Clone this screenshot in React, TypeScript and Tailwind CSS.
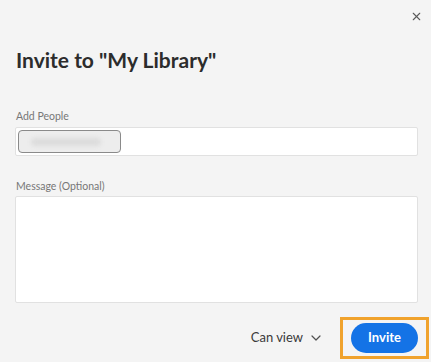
import { X, ChevronDown } from 'lucide-react';

export default function App() {
  return (
    <div className="w-[431px] h-[362px] bg-[#f4f4f4] overflow-hidden font-['Lato',sans-serif]">
      <div className="flex justify-end pt-[10px] pr-[8px]">
        <button className="text-[#5a5a5a]">
          <X size={13} strokeWidth={2} />
        </button>
      </div>
      <div className="pl-[15px] pr-[13px]">
        <h1 className="mt-[23px] text-[21px] leading-[28px] font-bold text-[#2c2c2c] pl-px">
          Invite to "My Library"
        </h1>

        <label className="block mt-[35px] text-[10.5px] leading-[14px] text-[#777] pl-px">Add People</label>
        <div className="mt-[4px] h-[29px] bg-white border border-[#e1e1e1] rounded-[2px] flex items-center pl-[2px]">
          <div className="w-[103px] h-[23px] rounded-[4px] border border-[#8a8a8a] bg-[#ededed] flex items-center px-[12px]">
            <div className="w-[70px] h-[8px] rounded-full bg-[#dcdcdc] blur-[2px]" />
          </div>
        </div>

        <label className="block mt-[23px] text-[10.5px] leading-[14px] text-[#777] pl-px">Message (Optional)</label>
        <textarea className="block mt-[3px] w-full h-[107px] bg-white border border-[#e1e1e1] rounded-[2px] resize-none outline-none" />

        <div className="flex items-center justify-end mt-[14px] -mr-[11px]">
          <div className="flex items-center gap-[5px] text-[13px] text-[#3a3a3a] mr-[16px]">
            <span>Can view</span>
            <ChevronDown size={16} strokeWidth={1.8} className="text-[#505050]" />
          </div>
          <div className="border-[3px] border-[#f0a22c] px-[8px] py-[3px]">
            <button className="w-[67px] h-[30px] rounded-full bg-[#1473e6] text-white text-[13px] font-bold">
              Invite
            </button>
          </div>
        </div>
      </div>
    </div>
  );
}
